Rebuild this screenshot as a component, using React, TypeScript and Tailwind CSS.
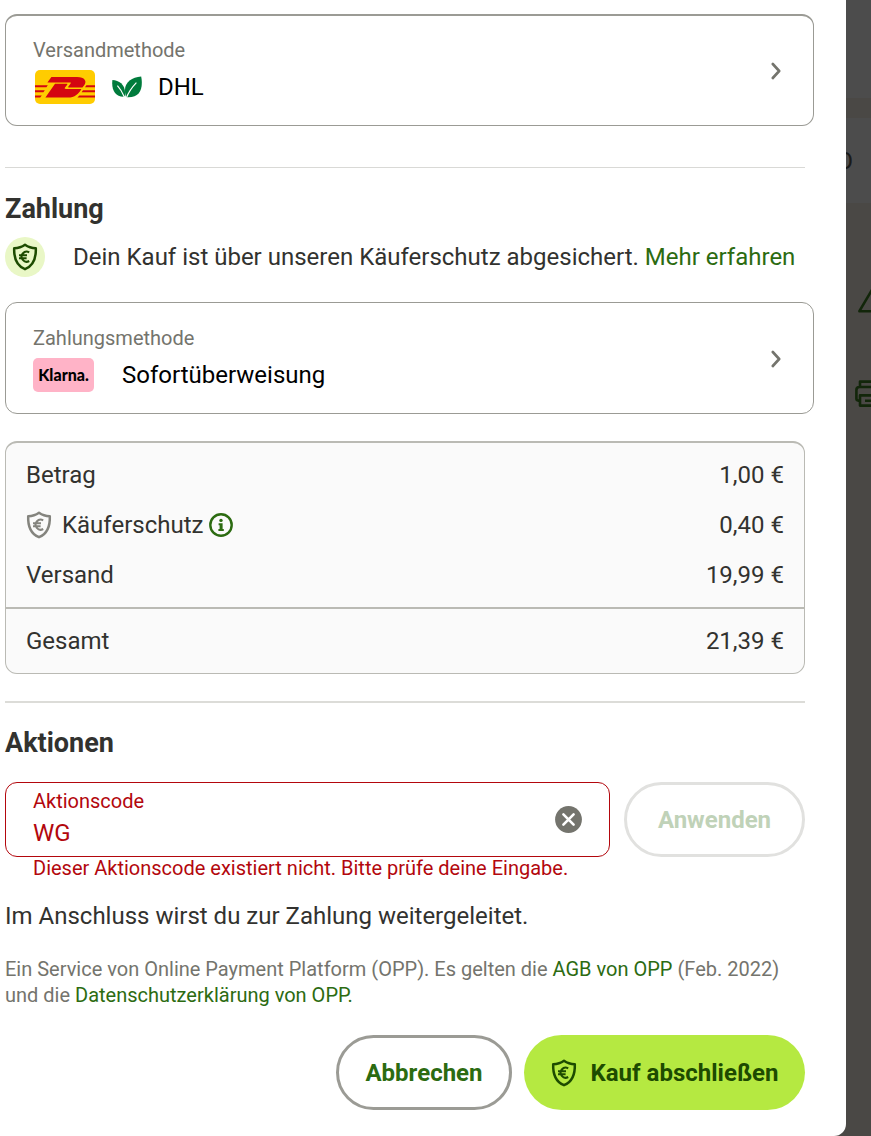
import type { ReactNode } from "react";

interface MethodCardProps {
  label: string;
  value: string;
  className?: string;
  children: ReactNode;
}

function ShieldEuro({ className }: { className?: string }) {
  return (
    <svg viewBox="0 0 26 28" fill="none" stroke="currentColor" className={className} aria-hidden="true">
      <path
        d="M13 1.8 C10 4 6.2 5.2 2.2 5.2 C1.8 15 4 22.5 13 26.2 C22 22.5 24.2 15 23.8 5.2 C19.8 5.2 16 4 13 1.8Z"
        strokeWidth="2.5"
        strokeLinejoin="round"
      />
      <path d="M17.2 9.4 A5 5 0 1 0 17.2 18 M7 12.2 H15 M7 15.2 H14.6" strokeWidth="2.1" />
    </svg>
  );
}

function DhlLogo() {
  return (
    <svg viewBox="0 0 60 34" className="h-[34px] w-[60px]" aria-hidden="true">
      <rect width="60" height="34" rx="5" fill="#ffcc00" />
      <g fill="#d40511">
        <path d="M16.4 7 H42 C50 7 52 11.4 49.4 15 L47.4 17.6 H34.4 C32.6 17.6 33.2 16.8 33.8 16 L35.4 13.8 C36 13 36 12.6 35 12.6 H12.4Z" />
        <path d="M20 13.8 H31.6 C32.6 13.8 32.6 14.2 32 15 L30 17.6 C29.4 18.6 29.6 18.9 31 18.9 H46.4 C44 23.4 39.6 27.6 33 27.6 H10.4Z" />
        <path d="M0 15.2 H12.8 L11.4 17.2 H0Z M0 20.2 H9.8 L8.4 22.2 H0Z M0 25.4 H6.8 L5.2 27.6 H0Z" />
        <path d="M51.4 15.2 H60 V17.2 H50Z M48 20.2 H60 V22.2 H46.6Z M44.4 25.4 H60 V27.6 H42.4Z" />
      </g>
    </svg>
  );
}

function Leaves() {
  return (
    <svg viewBox="0 0 30 22" className="h-[22px] w-[30px]" aria-hidden="true">
      <path d="M0.4 4 C7.6 4.6 14.6 9 12.8 20.6 C3.6 21.4 -0.8 14.6 0.4 4Z" fill="#007b3c" />
      <path d="M29.2 0.6 C18 1.4 9.6 8.4 14.2 21.2 C27.4 22.4 31.6 13.4 29.2 0.6Z" fill="#007b3c" />
      <path d="M5.4 9.6 C8.6 13 10.6 16.6 12.6 21.4 M24.4 6.6 C20.6 10.6 17 15 14.4 21.8" stroke="#fff" strokeWidth="1.2" fill="none" />
    </svg>
  );
}

function Chevron() {
  return (
    <svg viewBox="0 0 10 18" className="h-[18px] w-[10px]" fill="none" stroke="#74746d" strokeWidth="2.6" strokeLinecap="round" strokeLinejoin="round" aria-hidden="true">
      <path d="M1.8 2 L8.2 9 L1.8 16" />
    </svg>
  );
}

function MethodCard({ label, value, className = "", children }: MethodCardProps) {
  return (
    <button
      type="button"
      className={`flex w-full items-center justify-between rounded-xl border border-[#9b9b95] pr-8 pb-[21px] pl-[27px] text-left ${className}`}
    >
      <span className="flex flex-col gap-2">
        <span className="text-[20px] leading-6 text-[#74746d]">{label}</span>
        <span className="flex h-[34px] items-center text-[24px] leading-7 text-black">
          {children}
          {value}
        </span>
      </span>
      <Chevron />
    </button>
  );
}

function PriceRow({ label, price }: { label: ReactNode; price: string }) {
  return (
    <div className="flex h-[50px] items-center justify-between">
      <dt className="flex items-center">{label}</dt>
      <dd>{price}</dd>
    </div>
  );
}

function InfoIcon() {
  return (
    <svg viewBox="0 0 24 24" className="size-6" aria-hidden="true">
      <circle cx="12" cy="12" r="10.7" fill="none" stroke="#2c6b11" strokeWidth="2.4" />
      <circle cx="12" cy="7.4" r="1.7" fill="#2c6b11" />
      <path d="M9.6 10.2 H13.6 V16 H14.8 V18 H9.4 V16 H10.6 V12.2 H9.6Z" fill="#2c6b11" />
    </svg>
  );
}

// Strip of the page that stays visible behind the dialog
function Backdrop() {
  return (
    <aside className="w-[25px] shrink-0 overflow-hidden text-[24px] text-[#1a1a19]">
      <div className="h-[98px] bg-[#4c4c4c]" />
      <div className="h-5" />
      <div className="flex h-[85px] items-center bg-[#4c4c4c]">
        <span className="flex w-[7px] justify-end overflow-hidden">O</span>
      </div>
      <div className="flex flex-col gap-[66px] pt-[83px] pl-[9px]">
        <svg viewBox="0 0 32 28" className="ml-[3px] h-7 w-8" fill="none" stroke="#12260a" strokeWidth="2.6" strokeLinejoin="round" aria-hidden="true">
          <path d="M16 0.4 L30.6 25.2 H1.4Z" />
          <path d="M16 10 V17 M16 20 V23" />
        </svg>
        <svg viewBox="0 0 28 28" className="size-7" fill="none" stroke="#12260a" strokeWidth="2.6" strokeLinejoin="round" aria-hidden="true">
          <path d="M5 7 V1.6 H23 V7 M5 20.6 H3.4 Q1.4 20.6 1.4 18.6 V10 Q1.4 7 4.4 7 H23.6 Q26.6 7 26.6 10 V18.6 Q26.6 20.6 24.6 20.6 H23" />
          <path d="M5 15.4 H23 V25.6 H5Z M10 20.8 H18" />
        </svg>
      </div>
    </aside>
  );
}

export default function App() {
  return (
    <div className="flex min-h-screen bg-[#4a4845] font-['Roboto',sans-serif] text-[24px] leading-7 text-[#32322f]">
      <main className="min-w-0 flex-1 rounded-br-xl bg-white pt-[14px] pr-8 pb-[26px] pl-[5px]">
        <MethodCard label="Versandmethode" value="DHL" className="border-t-2 pt-[22px]">
          <span className="mr-4 ml-0.5 flex items-center gap-[17px]">
            <DhlLogo />
            <Leaves />
          </span>
        </MethodCard>

        <div className="mr-[9px]">
          <hr className="mt-[41px] border-[#d9d9d6]" />
          <h2 className="mt-[25px] text-[27px] leading-8 font-bold">Zahlung</h2>
          <div className="mt-3 flex items-center gap-7">
            <span className="flex size-10 shrink-0 items-center justify-center rounded-full bg-[#e9f7c6] text-[#1d4b00]">
              <ShieldEuro className="h-7 w-[26px]" />
            </span>
            <p>
              Dein Kauf ist über unseren Käuferschutz abgesichert.{" "}
              <a href="#kaeuferschutz" className="text-[#2c6b11]">Mehr erfahren</a>
            </p>
          </div>
        </div>

        <MethodCard label="Zahlungsmethode" value="Sofortüberweisung" className="mt-[25px] pt-[23px]">
          <span className="mr-7 flex h-[34px] w-[61px] items-center justify-center rounded-[5px] bg-[#ffb3c7] font-['Lato',sans-serif] text-[16px] font-black">
            Klarna.
          </span>
        </MethodCard>

        <div className="mr-[9px]">
          <dl className="mt-[27px] rounded-xl border border-t-2 border-[#babab4] bg-[#fafafa]">
            <div className="px-5 py-[7px]">
              <PriceRow label="Betrag" price="1,00 €" />
              <PriceRow
                label={
                  <>
                    <ShieldEuro className="mr-[10px] h-7 w-[26px] text-[#84847e]" />
                    Käuferschutz
                    <button type="button" aria-label="Info zum Käuferschutz" className="ml-1.5">
                      <InfoIcon />
                    </button>
                  </>
                }
                price="0,40 €"
              />
              <PriceRow label="Versand" price="19,99 €" />
            </div>
            <div className="border-t-2 border-[#babab4] px-5 py-[7px]">
              <PriceRow label="Gesamt" price="21,39 €" />
            </div>
          </dl>

          <hr className="mt-[27px] border-t-2 border-[#dcdcd8]" />
          <h2 className="mt-6 text-[27px] leading-8 font-bold">Aktionen</h2>

          <form className="mt-[23px] flex gap-[14px]" onSubmit={(e) => e.preventDefault()}>
            <div className="flex h-[75px] min-w-0 flex-1 items-center rounded-xl border border-[#b3070d] px-[27px] text-[#b3070d]">
              <div className="flex min-w-0 flex-1 flex-col gap-1 pb-0.5">
                <label htmlFor="promo" className="text-[20px] leading-6">Aktionscode</label>
                <input
                  id="promo"
                  type="text"
                  defaultValue="WG"
                  aria-invalid="true"
                  aria-describedby="promo-error"
                  className="h-8 w-full text-[24px] outline-none"
                />
              </div>
              <button type="button" aria-label="Eingabe löschen">
                <svg viewBox="0 0 27 27" className="size-[27px]" aria-hidden="true">
                  <circle cx="13.5" cy="13.5" r="13.4" fill="#74746d" />
                  <path d="M8.4 8.4 L18.6 18.6 M18.6 8.4 L8.4 18.6" stroke="#fff" strokeWidth="2.6" strokeLinecap="round" />
                </svg>
              </button>
            </div>
            <button
              type="submit"
              disabled
              className="h-[75px] w-[181px] shrink-0 rounded-full border-3 border-[#e1e1df] font-bold text-[#c0d2b8]"
            >
              Anwenden
            </button>
          </form>
          <p id="promo-error" className="pl-7 text-[20px] leading-[22px] text-[#b3070d]">
            Dieser Aktionscode existiert nicht. Bitte prüfe deine Eingabe.
          </p>

          <p className="mt-[23px]">Im Anschluss wirst du zur Zahlung weitergeleitet.</p>

          <p className="mt-[26px] text-[20px] leading-[26px] text-[#74746d]">
            Ein Service von Online Payment Platform (OPP). Es gelten die{" "}
            <a href="#agb" className="text-[#2c6b11]">AGB von OPP</a> (Feb. 2022) und die{" "}
            <a href="#datenschutz" className="text-[#2c6b11]">Datenschutzerklärung von OPP.</a>
          </p>

          <div className="mt-[27px] flex justify-end gap-3 font-bold">
            <button
              type="button"
              className="h-[75px] w-44 rounded-full border-3 border-[#9b9b95] text-[#2c6b11]"
            >
              Abbrechen
            </button>
            <button
              type="button"
              className="flex h-[75px] w-[281px] items-center justify-center gap-[14px] rounded-full bg-[#b5e941] text-[#1d4b00]"
            >
              <ShieldEuro className="h-7 w-[26px]" />
              Kauf abschließen
            </button>
          </div>
        </div>
      </main>
      <Backdrop />
    </div>
  );
}
